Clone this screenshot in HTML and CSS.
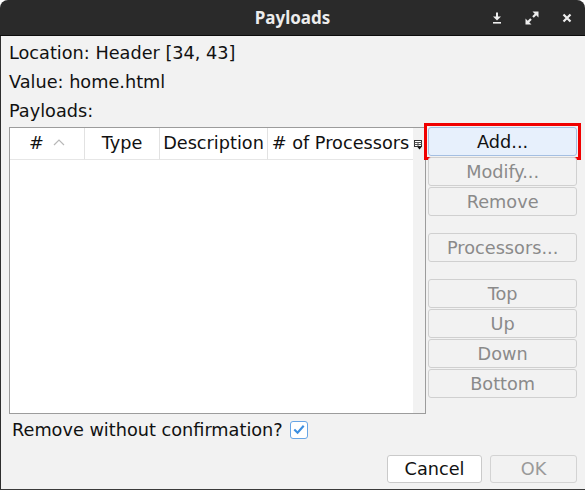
FILE: index.html
```html
<!DOCTYPE html>
<html>
<head>
<meta charset="utf-8">
<title>Payloads</title>
<link rel="stylesheet" href="styles.css">
</head>
<body>
<div class="window">
  <header class="titlebar">
    <span class="title">Payloads</span>
    <div class="wm">
      <span class="wm-btn">
        <svg width="10" height="12" viewBox="0 0 10 12"><path d="M5 0.5v5" stroke="#eee" stroke-width="2"/><path d="M1 4.5h8l-4 4z" fill="#eee"/><rect x="1" y="10" width="8" height="1.6" fill="#eee"/></svg>
      </span>
      <span class="wm-btn">
        <svg width="14" height="14" viewBox="0 0 14 14"><path d="M8 6L11.5 2.5M6 8L2.5 11.5" stroke="#eee" stroke-width="2.2"/><path d="M7.5 0.5H13.5V6.5Z M0.5 7.5V13.5H6.5Z" fill="#eee"/></svg>
      </span>
      <span class="wm-btn">
        <svg width="10" height="10" viewBox="0 0 10 10"><path d="M1.5 1.5L8.5 8.5M8.5 1.5L1.5 8.5" stroke="#eee" stroke-width="2.2"/></svg>
      </span>
    </div>
  </header>
  <main class="content">
    <div class="info">
      <div class="line">Location: Header [34, 43]</div>
      <div class="line">Value: home.html</div>
      <div class="line">Payloads:</div>
    </div>
    <div class="main-row">
      <div class="table">
        <div class="thead">
          <div class="th c1">#<svg class="sort" width="12" height="7" viewBox="0 0 12 7"><polyline points="1,6 6,1 11,6" fill="none" stroke="#b8b8b8" stroke-width="1.2"/></svg></div>
          <div class="th c2">Type</div>
          <div class="th c3">Description</div>
          <div class="th c4"># of Processors</div>
          <div class="col-ctrl">
            <svg width="8" height="10" viewBox="0 0 8 10"><rect x="0.5" y="0.5" width="7" height="6" fill="#fff" stroke="#333"/><path d="M0.5 2.5H7.5M4 2.5V6.5M0.5 4.5H7.5" stroke="#555" stroke-width="1"/><path d="M3 6.5H8L5.5 9.5Z" fill="#111"/></svg>
          </div>
        </div>
        <div class="tbody">
          <div class="rows"></div>
          <div class="strip"></div>
        </div>
      </div>
      <div class="side">
        <div class="focus-ring"><button class="btn primary">Add...</button></div>
        <button class="btn" disabled>Modify...</button>
        <button class="btn" disabled>Remove</button>
        <button class="btn sep" disabled>Processors...</button>
        <button class="btn sep" disabled>Top</button>
        <button class="btn" disabled>Up</button>
        <button class="btn" disabled>Down</button>
        <button class="btn" disabled>Bottom</button>
      </div>
    </div>
    <label class="check-row">Remove without confirmation?
      <span class="checkbox"><svg width="17" height="17" viewBox="0 0 17 17"><path d="M3.5 8.5L7 12L13.5 4.5" fill="none" stroke="#3b8ee0" stroke-width="2.2"/></svg></span>
    </label>
    <div class="footer">
      <button class="fbtn cancel">Cancel</button>
      <button class="fbtn ok" disabled>OK</button>
    </div>
  </main>
</div>
</body>
</html>
```
FILE: styles.css
```css
body {
  margin: 0;
  background: #ffffff;
  font-family: "DejaVu Sans", sans-serif;
  font-size: 17.7px;
  color: #111;
}

.window {
  width: 585px;
  height: 490px;
  display: flex;
  flex-direction: column;
  border-radius: 8px 8px 0 0;
  overflow: hidden;
}

.titlebar {
  height: 35px;
  flex: none;
  background: #2a2a2a;
  border-bottom: 1px solid #0c0c0c;
  display: grid;
  grid-template-columns: 1fr auto 1fr;
  align-items: center;
}

.title {
  grid-column: 2;
  font-family: "Noto Sans", sans-serif;
  font-weight: 700;
  font-size: 17px;
  line-height: 35px;
  color: #ececec;
}

.wm {
  grid-column: 3;
  justify-self: end;
  display: flex;
  padding-right: 1px;
}

.wm-btn {
  width: 35px;
  height: 35px;
  display: flex;
  align-items: center;
  justify-content: center;
}

.content {
  flex: 1;
  background: #f2f2f2;
  border-left: 1px solid #2e2e2e;
  border-bottom: 1px solid #3a3a3a;
  padding: 3px 8px 0 8px;
  display: flex;
  flex-direction: column;
}

.info .line {
  line-height: 29px;
}

.main-row {
  display: flex;
  gap: 1px;
  margin-top: 1px;
  height: 287px;
}

.table {
  width: 418px;
  box-sizing: border-box;
  border: 1px solid #9c9c9c;
  background: #f2f2f2;
  display: flex;
  flex-direction: column;
}

.thead {
  display: flex;
  height: 32px;
  flex: none;
}

.th {
  box-sizing: border-box;
  height: 32px;
  background: #fff;
  border-right: 1px solid #e2e2e2;
  border-bottom: 1px solid #e6e6e6;
  display: flex;
  align-items: center;
  justify-content: center;
  line-height: 31px;
  white-space: nowrap;
}

.c1 { width: 75px; }
.c2 { width: 75px; }
.c3 { width: 108px; }
.c4 { width: 145px; border-right: none; }

.sort {
  margin-left: 9px;
  margin-top: -2px;
}

.col-ctrl {
  flex: 1;
  display: flex;
  align-items: center;
  padding-left: 1px;
  padding-top: 2px;
}

.tbody {
  flex: 1;
  display: flex;
}

.rows {
  width: 403px;
  background: #fff;
}

.strip {
  flex: 1;
}

.side {
  width: 149px;
  display: flex;
  flex-direction: column;
  gap: 1px;
  margin-left: 1px;
}

.btn {
  height: 29px;
  box-sizing: border-box;
  border: 1px solid #d0d0d0;
  border-radius: 3px;
  background: #f2f2f2;
  font: inherit;
  color: #8a8a8a;
  padding: 1px 0 0;
}

.focus-ring {
  margin: -4px;
  padding: 1px;
  border: 3px solid #f00000;
  display: flex;
  flex-direction: column;
}

.btn.primary {
  background: #e7f0fc;
  border-color: #a4bfe2;
  color: #111;
}

.btn.sep {
  margin-top: 16px;
}

.check-row {
  margin-top: 1px;
  height: 29px;
  display: flex;
  align-items: center;
  padding-left: 3px;
  gap: 7px;
}

.checkbox {
  width: 18px;
  height: 18px;
  box-sizing: border-box;
  border: 1px solid #67a5e6;
  border-radius: 3px;
  background: #fff;
  display: flex;
  align-items: center;
  justify-content: center;
}

.checkbox svg {
  display: block;
}

.footer {
  margin-top: 11px;
  display: flex;
  justify-content: flex-end;
  gap: 8px;
}

.fbtn {
  height: 28px;
  box-sizing: border-box;
  border: 1px solid #cacaca;
  border-radius: 3px;
  font: inherit;
  padding: 0;
}

.cancel {
  width: 95px;
  background: #fff;
  color: #111;
}

.ok {
  width: 87px;
  background: #f2f2f2;
  border-color: #d3d3d3;
  color: #9a9a9a;
}
```
